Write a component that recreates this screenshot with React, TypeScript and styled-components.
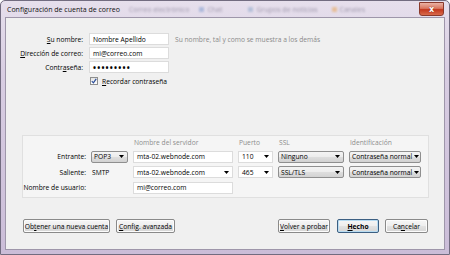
import React from 'react';
import styled, { createGlobalStyle } from 'styled-components';

const Global = createGlobalStyle`
  html, body { margin: 0; padding: 0; width: 450px; height: 255px; overflow: hidden; background: #fff; }
  * { box-sizing: border-box; }
`;

const FONT = `"Open Sans", "Noto Sans", "DejaVu Sans", sans-serif`;

const Window = styled.div`
  width: 450px;
  height: 255px;
  display: flex;
  flex-direction: column;
  padding: 0 4px 4px 4px;
  border: 1px solid #726c80;
  border-radius: 5px 5px 0 0;
  background: linear-gradient(180deg, #e6dfec 0%, #d8cde2 30%, #cbbdd8 100%);
  font-family: ${FONT};
  font-size: 6.7px;
  color: #000;
  white-space: nowrap;
`;

const TitleBar = styled.div`
  height: 16px;
  display: flex;
  align-items: center;
  position: relative;
`;

const Title = styled.span`
  font-size: 7px;
  margin-left: 2px;
  color: #111;
`;

const GhostTabs = styled.div`
  display: flex;
  align-items: center;
  margin-left: 9px;
  filter: blur(0.8px);
  opacity: 0.45;
  color: #4a4560;
  font-size: 7px;
`;

const GhostTab = styled.span<{ $dot?: string; $gap: number }>`
  display: flex;
  align-items: center;
  gap: 3px;
  margin-right: ${(p) => p.$gap}px;
  &::before {
    content: '';
    display: ${(p) => (p.$dot ? 'block' : 'none')};
    width: 5px;
    height: 5px;
    background: ${(p) => p.$dot};
  }
`;

const CloseBtn = styled.div`
  position: absolute;
  right: 1px;
  top: 1px;
  width: 25px;
  height: 14px;
  border: 1px solid #8a3a2c;
  border-radius: 0 0 3px 3px;
  background: linear-gradient(180deg, #eab2a4 0%, #d9765f 45%, #c3381e 55%, #d86a4c 100%);
  display: flex;
  align-items: center;
  justify-content: center;
  color: #fff;
  font-family: "DejaVu Sans", sans-serif;
  font-weight: bold;
  font-size: 8px;
  text-shadow: 0 0 1px #6a1a10;
`;

const Client = styled.div`
  flex: 1;
  display: flex;
  flex-direction: column;
  background: #f0f0f0;
  border: 1px solid #9e96aa;
`;

const TopForm = styled.div`
  display: grid;
  grid-template-columns: 77px 80px auto;
  column-gap: 6px;
  row-gap: 2px;
  grid-auto-rows: 12px;
  margin-top: 15px;
  align-items: center;
`;

const Label = styled.label`
  text-align: right;
`;

const TextBox = styled.div`
  height: 12px;
  background: #fff;
  border: 1px solid #dcdcdc;
  display: flex;
  align-items: center;
  padding: 0 3px;
  overflow: hidden;
  justify-content: space-between;
`;

const Dots = styled.span`
  font-size: 8px;
  letter-spacing: 1.2px;
  font-weight: 700;
`;

const Hint = styled.span`
  color: #8a8a8a;
`;

const CheckRow = styled.div`
  grid-column: 2 / 4;
  display: flex;
  align-items: center;
  gap: 4px;
  height: 12px;
`;

const CheckBox = styled.span`
  width: 8px;
  height: 8px;
  border: 1px solid #8e8f8f;
  background: linear-gradient(180deg, #e4e4e4, #ffffff);
  display: flex;
  align-items: center;
  justify-content: center;
  margin-left: 1px;
`;

const Panel = styled.div`
  margin: auto 15px 0 16px;
  height: 63px;
  border: 1px solid #e0e0e0;
  background: #f5f5f5;
  display: grid;
  grid-template-columns: 63px 37px 100px 35px 66px 72px;
  column-gap: 5px;
  grid-template-rows: 10px 12px 12px 12px;
  row-gap: 3.5px;
  padding-top: 1px;
  align-items: center;
`;

const ColHead = styled.span`
  color: #8d8d8d;
  padding-left: 1px;
`;

const PanelLabel = styled.span`
  text-align: right;
`;

const Plain = styled.span`
  padding-left: 1px;
`;

const Select = styled.div`
  height: 12px;
  border: 1px solid #8f8f8f;
  border-radius: 2px;
  background: linear-gradient(180deg, #f4f4f4 0%, #ececec 50%, #dedede 51%, #d2d2d2 100%);
  display: flex;
  align-items: center;
  justify-content: space-between;
  padding: 0 3px 0 2px;
  gap: 2px;
  overflow: hidden;
`;

const Arrow = () => (
  <svg width="5" height="3" viewBox="0 0 5 3" style={{ flexShrink: 0 }}>
    <path d="M0 0 H5 L2.5 3 Z" fill="#000" />
  </svg>
);

const ButtonRow = styled.div`
  display: flex;
  align-items: center;
  margin: 21px 16px 16px 17px;
  gap: 6px;
`;

const Button = styled.button<{ $w: number; $default?: boolean }>`
  width: ${(p) => p.$w}px;
  height: 14px;
  padding: 0;
  font-family: ${FONT};
  font-size: 6.7px;
  white-space: nowrap;
  color: #000;
  border: 1px solid ${(p) => (p.$default ? '#3c5f82' : '#8a8a8a')};
  border-radius: 2px;
  background: linear-gradient(180deg, #f6f6f6 0%, #eeeeee 50%, #e2e2e2 51%, #d6d6d6 100%);
  box-shadow: inset 0 0 0 1px ${(p) => (p.$default ? '#b8dcf2' : '#fcfcfc')};
  font-weight: ${(p) => (p.$default ? 700 : 400)};
  overflow: hidden;
`;

const Spacer = styled.div`
  flex: 1;
`;

const U = styled.span`
  text-decoration: underline;
`;

export default function App() {
  return (
    <>
      <Global />
      <Window>
        <TitleBar>
          <Title>Configuración de cuenta de correo</Title>
          <GhostTabs>
            <GhostTab $gap={10}>Correo electrónico</GhostTab>
            <GhostTab $dot="#6b8fc8" $gap={26}>Chat</GhostTab>
            <GhostTab $dot="#7d9ec4" $gap={14}>Grupos de noticias</GhostTab>
            <GhostTab $dot="#e89a3a" $gap={0}>Canales</GhostTab>
          </GhostTabs>
          <CloseBtn>x</CloseBtn>
        </TitleBar>
        <Client>
          <TopForm>
            <Label><U>S</U>u nombre:</Label>
            <TextBox>Nombre Apellido</TextBox>
            <Hint>Su nombre, tal y como se muestra a los demás</Hint>
            <Label><U>D</U>irección de correo:</Label>
            <TextBox>mi@correo.com</TextBox>
            <span />
            <Label>Contr<U>a</U>seña:</Label>
            <TextBox><Dots>•••••••••</Dots></TextBox>
            <span />
            <span />
            <CheckRow>
              <CheckBox>
                <svg width="6" height="6" viewBox="0 0 6 6">
                  <path d="M0.8 3.2 L2.4 4.8 L5.2 0.8" fill="none" stroke="#2a4d9a" strokeWidth="1.2" />
                </svg>
              </CheckBox>
              <span><U>R</U>ecordar contraseña</span>
            </CheckRow>
          </TopForm>

          <Panel>
            <span />
            <span />
            <ColHead>Nombre del servidor</ColHead>
            <ColHead>Puerto</ColHead>
            <ColHead>SSL</ColHead>
            <ColHead>Identificación</ColHead>

            <PanelLabel>Entrante:</PanelLabel>
            <Select>POP3<Arrow /></Select>
            <TextBox>mta-02.webnode.com</TextBox>
            <TextBox>110<Arrow /></TextBox>
            <Select>Ninguno<Arrow /></Select>
            <Select>Contraseña normal<Arrow /></Select>

            <PanelLabel>Saliente:</PanelLabel>
            <Plain>SMTP</Plain>
            <TextBox>mta-02.webnode.com<Arrow /></TextBox>
            <TextBox>465<Arrow /></TextBox>
            <Select>SSL/TLS<Arrow /></Select>
            <Select>Contraseña normal<Arrow /></Select>

            <PanelLabel>Nombre de usuario:</PanelLabel>
            <span />
            <TextBox>mi@correo.com</TextBox>
          </Panel>

          <ButtonRow>
            <Button $w={87}>Ob<U>t</U>ener una nueva cuenta</Button>
            <Button $w={59}><U>C</U>onfig. avanzada</Button>
            <Spacer />
            <Button $w={52}><U>V</U>olver a probar</Button>
            <Button $w={42} $default style={{ marginLeft: 1 }}><U>H</U>echo</Button>
            <Button $w={43}>Ca<U>n</U>celar</Button>
          </ButtonRow>
        </Client>
      </Window>
    </>
  );
}
